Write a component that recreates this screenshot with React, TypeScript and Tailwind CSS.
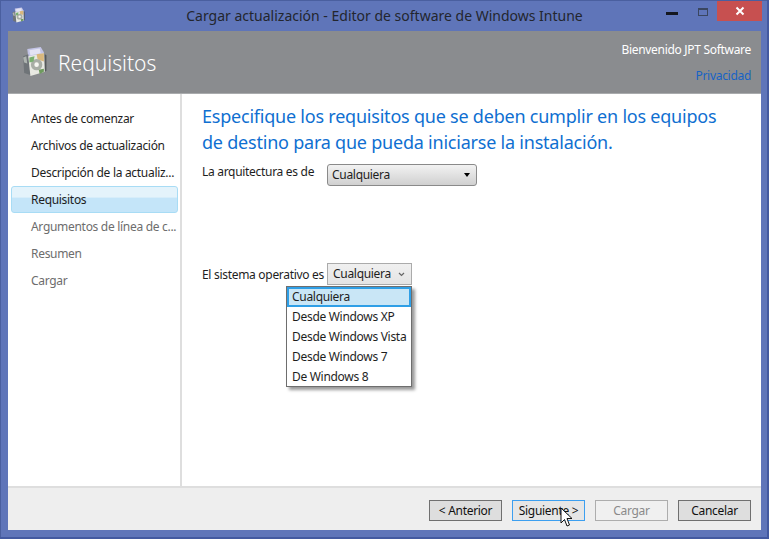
import React from "react";

const font = { fontFamily: '"Noto Sans", "Open Sans", sans-serif' };

function AppIcon({ size }: { size: number }) {
  return (
    <svg width={size} height={size * 1.15} viewBox="0 0 26 30">
      <path d="M7 3 L20 1 L23 6 L22 10 L8 12 Z" fill="#c3c4e6" />
      <path d="M9 4 L19 2.5 L20 7 L10 9 Z" fill="#e3e3f4" />
      <path d="M3 10 L8 8 L10 28 L4 26 Z" fill="#6f7478" />
      <path d="M3 11 L6 10 L7 17 L4 16 Z" fill="#aeb4b0" />
      <path d="M8 10 L23 7 L24 25 L10 29 Z" fill="#e8e9e2" />
      <path d="M16 8 L23 7 L23 15 L17 13 Z" fill="#d9b77c" />
      <circle cx="16" cy="18" r="5.5" fill="#a9aea6" />
      <circle cx="16" cy="18" r="2.2" fill="#f7f7f2" />
      <path d="M9 11 L14 10 L13 15 L9 16 Z" fill="#79b070" />
      <path d="M18 23 L23 22 L23 25 L19 27 Z" fill="#6e9a5e" />
      <path d="M24 8 L25.5 9 L25.5 24 L24 25 Z" fill="#55585a" />
    </svg>
  );
}

function NavItem({ label, active, disabled }: { label: string; active?: boolean; disabled?: boolean }) {
  if (active) {
    return (
      <div className="h-[27px] ml-[3px] mr-[2px] rounded-[3px] border border-[#a8dcf5] bg-[linear-gradient(#e4f3fb_0%,#e4f3fb_40%,#c4e5f9_45%,#c4e5f9_100%)] pl-[19px] leading-[26px] text-[#1e1e1e]">
        {label}
      </div>
    );
  }
  return (
    <div className={`h-[27px] pl-[23px] leading-[28px] whitespace-nowrap ${disabled ? "text-[#6d6d6d]" : "text-[#1e1e1e]"}`}>
      {label}
    </div>
  );
}

function FooterButton({ label, focused, disabled }: { label: string; focused?: boolean; disabled?: boolean }) {
  let cls = "border-[#707070] bg-[#dedede] text-[#111]";
  if (focused) cls = "border-[#3c9ff0] bg-[#e6e6e6] text-[#111]";
  if (disabled) cls = "border-[#adadad] bg-[#f0f0f0] text-[#8a8a8a]";
  return (
    <div className={`w-[73px] h-[21px] border flex items-center justify-center text-[12px] ${cls}`}>{label}</div>
  );
}

export default function App() {
  return (
    <div
      className="w-[769px] h-[539px] overflow-hidden bg-[#5f75b9] shadow-[inset_-2px_-2px_0_#4359a0,inset_1px_1px_0_#4a5f9f] relative flex flex-col text-[12px] tracking-[-0.3px] text-[#1e1e1e]"
      style={font}
    >
      {/* barra de titulo */}
      <div className="h-[31px] shrink-0 relative flex items-center justify-center text-[14px] tracking-normal text-[#23262e] pb-[1px]">
        <div className="absolute left-[11px] top-[7px]">
          <AppIcon size={14} />
        </div>
        <span>Cargar actualización - Editor de software de Windows Intune</span>
        <div className="absolute right-[7px] top-px flex items-start">
          <div className="w-[12px] h-[3px] bg-[#14171f] mt-[11px] mr-[20px]" />
          <div className="w-[10px] h-[8px] border border-[#3a4660] border-t-2 mt-[7px] mr-[9px]" />
          <div className="w-[45px] h-[20px] bg-[#c75050] flex items-center justify-center">
            <svg width="10" height="10" viewBox="0 0 10 10">
              <path d="M1.5 1.5 L8.5 8.5 M8.5 1.5 L1.5 8.5" stroke="#fff" strokeWidth="2" />
            </svg>
          </div>
        </div>
      </div>

      <div className="mx-[8px] w-[753px] h-[499px] flex flex-col">
        {/* cabecera */}
        <div className="h-[63px] shrink-0 bg-[#8a8c8f] flex justify-between border-b border-[#a9abad]">
          <div className="flex items-center pl-[12px]">
            <AppIcon size={27} />
            <span className="text-[21px] tracking-normal text-white ml-[11px] mt-[3px] font-light">Requisitos</span>
          </div>
          <div className="flex flex-col items-end pr-[10px] pt-[10px]">
            <span className="text-white text-[12px] leading-[18px]">Bienvenido JPT Software</span>
            <span className="text-[#1763c6] text-[12px] leading-[18px] mt-[8px]">Privacidad</span>
          </div>
        </div>

        {/* cuerpo */}
        <div className="h-[394px] shrink-0 bg-white flex border-b-2 border-[#dedede]">
          <div className="w-[172px] shrink-0 pt-[11px] border-r-2 border-[#dedede] box-content">
            <NavItem label="Antes de comenzar" />
            <NavItem label="Archivos de actualización" />
            <NavItem label="Descripción de la actualiz..." />
            <NavItem label="Requisitos" active />
            <NavItem label="Argumentos de línea de c..." disabled />
            <NavItem label="Resumen" disabled />
            <NavItem label="Cargar" disabled />
          </div>
          <div className="flex-1 relative pl-[20px] pt-[9px]">
            <h1 className="text-[#0f6fd1] text-[18px] tracking-[-0.22px] leading-[26px] font-normal whitespace-nowrap">
              Especifique los requisitos que se deben cumplir en los equipos
              <br />
              de destino para que pueda iniciarse la instalación.
            </h1>
            <div className="flex items-center mt-[9px] h-[22px]">
              <span className="w-[125px] shrink-0 whitespace-nowrap -mt-[7px]">La arquitectura es de</span>
              <div className="w-[150px] h-[22px] rounded-[3px] border border-[#8a8a8a] bg-[linear-gradient(#f2f2f2,#d0d0d0)] flex items-center justify-between pl-[4px] pr-[6px]">
                <span>Cualquiera</span>
                <div className="w-0 h-0 border-x-[3.5px] border-x-transparent border-t-[4px] border-t-black" />
              </div>
            </div>
            <div className="flex items-center mt-[77px] h-[22px]">
              <span className="w-[125px] shrink-0 whitespace-nowrap mt-[2px]">El sistema operativo es</span>
              <div className="w-[85px] h-[22px] border border-[#ababab] bg-[linear-gradient(#f0f0f0,#e4e4e4)] flex items-center justify-between pl-[5px] pr-[6px]">
                <span>Cualquiera</span>
                <svg width="7" height="5" viewBox="0 0 7 5">
                  <path d="M1 1 L3.5 3.5 L6 1" fill="none" stroke="#666" strokeWidth="1.2" />
                </svg>
              </div>
            </div>
            {/* lista desplegable */}
            <div className="absolute left-[104px] top-[192px] w-[126px] h-[101px] bg-white border border-[#6e6e6e] shadow-[3px_3px_3px_rgba(0,0,0,0.4)]">
              <div className="h-[20px] border-2 border-[#2f9fe6] bg-[#c9e6f6] pl-[3px] leading-[16px]">Cualquiera</div>
              <div className="h-[20px] pl-[5px] leading-[20px]">Desde Windows XP</div>
              <div className="h-[20px] pl-[5px] leading-[20px] whitespace-nowrap">Desde Windows Vista</div>
              <div className="h-[20px] pl-[5px] leading-[20px]">Desde Windows 7</div>
              <div className="h-[19px] pl-[5px] leading-[20px]">De Windows 8</div>
            </div>
          </div>
        </div>

        {/* pie */}
        <div className="flex-1 bg-[#eeeeee] flex justify-end items-start pt-[12px] pr-[10px] gap-[10px]">
          <FooterButton label="< Anterior" />
          <FooterButton label="Siguiente >" focused />
          <FooterButton label="Cargar" disabled />
          <FooterButton label="Cancelar" />
        </div>
      </div>

      {/* puntero */}
      <svg className="absolute left-[560px] top-[507px]" width="14" height="21" viewBox="0 0 14 21">
        <path d="M1 1 L1 16 L4.5 12.5 L7 19 L9.5 18 L7 11.5 L12 11.5 Z" fill="#fff" stroke="#111" strokeWidth="1" />
      </svg>
    </div>
  );
}
